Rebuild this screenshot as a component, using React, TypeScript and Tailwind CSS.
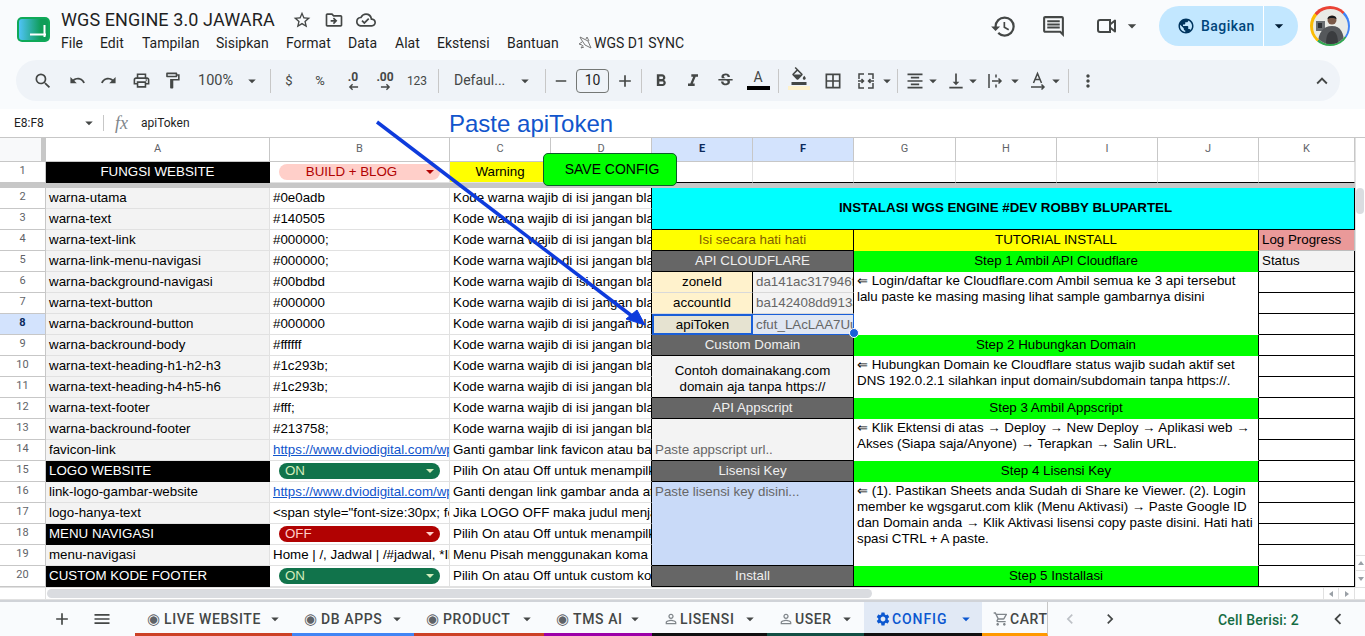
import type { ReactNode } from "react";
import { Fragment } from "react";
import { twMerge } from "tailwind-merge";
import {
  MdAdd,
  MdArrowDropDown,
  MdBorderAll,
  MdChevronLeft,
  MdChevronRight,
  MdExpandLess,
  MdFormatAlignCenter,
  MdFormatBold,
  MdFormatColorFill,
  MdFormatItalic,
  MdHistory,
  MdMenu,
  MdMoreVert,
  MdOutlineCloudDone,
  MdOutlineComment,
  MdOutlineDriveFileMove,
  MdOutlineFormatPaint,
  MdOutlinePersonOutline,
  MdOutlinePrint,
  MdOutlineShoppingCart,
  MdPublic,
  MdRedo,
  MdRemove,
  MdSearch,
  MdSettings,
  MdStarBorder,
  MdStrikethroughS,
  MdUndo,
  MdVerticalAlignBottom,
} from "react-icons/md";

const arial = "font-['Liberation_Sans',Arial,sans-serif]";

const Slot = ({ className, children }: { className: string; children?: ReactNode }) => (
  <div className={twMerge("flex h-full shrink-0 items-center justify-center text-[#444746]", className)}>{children}</div>
);

const Caret = ({ className = "w-[12px]" }: { className?: string }) => (
  <Slot className={className}>
    <MdArrowDropDown size={18} className="shrink-0" />
  </Slot>
);

const Sep = ({ className }: { className: string }) => <div className={twMerge("h-[24px] w-px shrink-0 bg-[#c7c7c7]", className)} />;

const Cell = ({ className, children }: { className?: string; children?: ReactNode }) => (
  <div className={twMerge("flex min-w-0 items-end overflow-hidden whitespace-nowrap border-r border-b border-[#e1e1e1] px-[3px] pb-[2px] text-[13.33px] leading-[17px] text-black", className)}>
    {children}
  </div>
);

const RowHead = ({ n, active }: { n: number; active?: boolean }) => (
  <div className={twMerge("flex items-center justify-center border-r border-b border-[#c7c7c7] bg-white pb-[1px] font-['Roboto'] text-[11px] text-[#5f6368]", active && "bg-[#d3e3fd] font-bold text-[#0b2a5c]")}>
    {n}
  </div>
);

const ColHead = ({ label, active }: { label: string; active?: boolean }) => (
  <div className={twMerge("flex items-center justify-center border-r border-b border-[#c7c7c7] bg-white font-['Roboto'] text-[11px] text-[#5f6368]", active && "bg-[#d3e3fd] font-bold text-[#0b2a5c]")}>
    {label}
  </div>
);

const Chip = ({ label, tone }: { label: string; tone: "on" | "off" | "build" }) => {
  const styles = {
    on: "bg-[#11734b] text-[#d4edbc]",
    off: "bg-[#b10202] text-[#ffcfc9]",
    build: "bg-[#ffcfc9] text-[#b10202]",
  };
  return (
    <div className="flex items-center border-r border-b border-[#e1e1e1] pl-[9px] pr-[9px]">
      <div className={twMerge("flex h-[16px] w-full items-center rounded-full pl-[6px] pr-[6px] text-[13.33px]", styles[tone])}>
        <span className={tone === "build" ? "flex-1 pr-[8px] text-center" : "flex-1"}>{label}</span>
        <span className="h-0 w-0 border-x-[4px] border-t-[4px] border-x-transparent border-t-current" />
      </div>
    </div>
  );
};

const kode = "Kode warna wajib di isi jangan blan";
const rows: { n: number; a: string; b: string; c: string; kind?: "head" | "link"; chip?: "on" | "off" }[] = [
  { n: 2, a: "warna-utama", b: "#0e0adb", c: kode },
  { n: 3, a: "warna-text", b: "#140505", c: kode },
  { n: 4, a: "warna-text-link", b: "#000000;", c: kode },
  { n: 5, a: "warna-link-menu-navigasi", b: "#000000;", c: kode },
  { n: 6, a: "warna-background-navigasi", b: "#00bdbd", c: kode },
  { n: 7, a: "warna-text-button", b: "#000000", c: kode },
  { n: 8, a: "warna-backround-button", b: "#000000", c: kode },
  { n: 9, a: "warna-backround-body", b: "#ffffff", c: kode },
  { n: 10, a: "warna-text-heading-h1-h2-h3", b: "#1c293b;", c: kode },
  { n: 11, a: "warna-text-heading-h4-h5-h6", b: "#1c293b;", c: kode },
  { n: 12, a: "warna-text-footer", b: "#fff;", c: kode },
  { n: 13, a: "warna-backround-footer", b: "#213758;", c: kode },
  { n: 14, a: "favicon-link", b: "https://www.dviodigital.com/wp", c: "Ganti gambar link favicon atau bar", kind: "link" },
  { n: 15, a: "LOGO WEBSITE", b: "ON", c: "Pilih On atau Off untuk menampilka", kind: "head", chip: "on" },
  { n: 16, a: "link-logo-gambar-website", b: "https://www.dviodigital.com/wp", c: "Ganti dengan link gambar anda ata", kind: "link" },
  { n: 17, a: "logo-hanya-text", b: '<span style="font-size:30px; fo', c: "Jika LOGO OFF maka judul menjad" },
  { n: 18, a: "MENU NAVIGASI", b: "OFF", c: "Pilih On atau Off untuk menampilka", kind: "head", chip: "off" },
  { n: 19, a: "menu-navigasi", b: "Home | /, Jadwal | /#jadwal, *Ib", c: "Menu Pisah menggunakan koma d" },
  { n: 20, a: "CUSTOM KODE FOOTER", b: "ON", c: "Pilih On atau Off untuk custom kod", kind: "head", chip: "on" },
];

const dark = "justify-center border-black bg-[#666666] text-[#efefef]";
const step = "col-span-4 justify-center border-[#00ff00] border-r-black bg-[#00ff00]";
const note = "col-span-4 items-start whitespace-normal border-b-[#ffffff] border-r-black bg-white pt-[1px] text-[13.33px] leading-[16px]";
const log = "border-black bg-white";

// merged block on the right of the sheet, keyed by row number
const right: Record<number, ReactNode> = {
  2: <Cell className="col-span-7 row-span-2 items-center justify-center border-black bg-[#00ffff] pb-[2px] pl-[8px] text-[13.33px] font-bold">INSTALASI WGS ENGINE #DEV ROBBY BLUPARTEL</Cell>,
  4: (
    <>
      <Cell className="col-span-2 justify-center border-black bg-[#ffff00] text-[#7f6000]">Isi secara hati hati</Cell>
      <Cell className="col-span-4 justify-center border-[#ffff00] border-r-black bg-[#ffff00]">TUTORIAL INSTALL</Cell>
      <Cell className="border-[#bdbdbd] bg-[#ea9999]">Log Progress</Cell>
    </>
  ),
  5: (
    <>
      <Cell className={twMerge("col-span-2", dark)}>API CLOUDFLARE</Cell>
      <Cell className={step}>Step 1 Ambil API Cloudflare</Cell>
      <Cell className="border-black bg-[#f3f3f3]">Status</Cell>
    </>
  ),
  6: (
    <>
      <Cell className="justify-center border-[#d9d9d9] border-r-black bg-[#fff2cc]">zoneId</Cell>
      <Cell className="border-black border-b-[#d9d9d9] bg-[#f3f3f3] text-[#666666]">da141ac317946f</Cell>
      <Cell className={twMerge("row-span-3 pt-[2px]", note)}>⇐ Login/daftar ke Cloudflare.com Ambil semua ke 3 api tersebut lalu paste ke masing masing lihat sample gambarnya disini</Cell>
      <Cell className={log} />
    </>
  ),
  7: (
    <>
      <Cell className="justify-center border-[#d9d9d9] border-r-black bg-[#fff2cc]">accountId</Cell>
      <Cell className="border-black border-b-[#d9d9d9] bg-[#f3f3f3] text-[#666666]">ba142408dd913a</Cell>
      <Cell className={log} />
    </>
  ),
  8: (
    <>
      <Cell className="justify-center border-2 border-[#1a5fd8] bg-[#e6e3d1] pb-0">apiToken</Cell>
      <Cell className="border border-l-0 border-[#1a5fd8] bg-[#e0e7f3] pb-[1px] text-[#666666]">cfut_LAcLAA7Uu</Cell>
      <Cell className={log} />
    </>
  ),
  9: (
    <>
      <Cell className={twMerge("col-span-2", dark)}>Custom Domain</Cell>
      <Cell className={step}>Step 2 Hubungkan Domain</Cell>
      <Cell className={log} />
    </>
  ),
  10: (
    <>
      <Cell className="col-span-2 row-span-2 justify-center whitespace-normal border-black bg-[#f3f3f3] text-center leading-[16px]">
        Contoh domainakang.com domain aja tanpa https://
      </Cell>
      <Cell className={twMerge("row-span-2 pt-[2px]", note)}>⇐ Hubungkan Domain ke Cloudflare status wajib sudah aktif set DNS 192.0.2.1 silahkan input domain/subdomain tanpa https://.</Cell>
      <Cell className={log} />
    </>
  ),
  11: <Cell className={log} />,
  12: (
    <>
      <Cell className={twMerge("col-span-2", dark)}>API Appscript</Cell>
      <Cell className={step}>Step 3 Ambil Appscript</Cell>
      <Cell className={log} />
    </>
  ),
  13: (
    <>
      <Cell className="col-span-2 row-span-2 border-black bg-[#f3f3f3] text-[#666666]">Paste appscript url..</Cell>
      <Cell className={twMerge("row-span-2 pt-[2px]", note)}>⇐ Klik Ektensi di atas → Deploy → New Deploy → Aplikasi web → Akses (Siapa saja/Anyone) → Terapkan → Salin URL.</Cell>
      <Cell className={log} />
    </>
  ),
  14: <Cell className={log} />,
  15: (
    <>
      <Cell className={twMerge("col-span-2", dark)}>Lisensi Key</Cell>
      <Cell className={step}>Step 4 Lisensi Key</Cell>
      <Cell className={log} />
    </>
  ),
  16: (
    <>
      <Cell className="col-span-2 row-span-4 items-start border-black bg-[#c9daf8] pt-[1px] text-[#666666]">Paste lisensi key disini...</Cell>
      <Cell className={twMerge("row-span-4", note)}>
        ⇐ (1). Pastikan Sheets anda Sudah di Share ke Viewer. (2). Login member ke wgsgarut.com klik (Menu Aktivasi) → Paste Google ID dan Domain anda → Klik Aktivasi lisensi copy paste disini. Hati hati spasi CTRL + A paste.
      </Cell>
      <Cell className={log} />
    </>
  ),
  17: <Cell className={log} />,
  18: <Cell className={log} />,
  19: <Cell className={log} />,
  20: (
    <>
      <Cell className={twMerge("col-span-2", dark)}>Install</Cell>
      <Cell className="col-span-4 justify-center border-black bg-[#00ff00]">Step 5 Installasi</Cell>
      <Cell className={log} />
    </>
  ),
};

const MergeIcon = () => (
  <svg width="20" height="20" viewBox="0 0 20 20" fill="none" stroke="currentColor" strokeWidth="1.5">
    <path d="M8 3H3v5M3 12v5h5M12 3h5v5M17 12v5h-5" />
    <path d="M2 10h5M5.500 8l2 2-2 2M18 10h-5M14.500 8l-2 2 2 2" />
  </svg>
);

const WrapIcon = () => (
  <svg width="18" height="18" viewBox="0 0 18 18" fill="none" stroke="currentColor" strokeWidth="1.500">
    <path d="M3 2v14M10 2.500v3M10 12.500v3M6 9h9M12.500 6.500L15 9l-2.500 2.500" />
  </svg>
);

const RotateIcon = () => (
  <svg width="20" height="20" viewBox="0 0 20 20" fill="none" stroke="currentColor" strokeWidth="1.500">
    <path d="M5.500 12L9.500 2.500 13.500 12M7 8.500h5" />
    <path d="M3 16h13M13.500 13.500L16 16l-2.500 2.500" />
  </svg>
);

const VideoIcon = () => (
  <svg width="26" height="26" viewBox="0 0 26 26" fill="none" stroke="currentColor" strokeWidth="2">
    <path d="M6 7h10v12H6a2 2 0 01-2-2V9a2 2 0 012-2z" />
    <path d="M16 11.500L21 7.500v11l-5-4" strokeLinejoin="round" />
  </svg>
);

const Decimal = ({ label, dir }: { label: string; dir: "left" | "right" }) => (
  <div className="relative flex w-[24px] justify-center pb-[8px] font-['Roboto'] text-[12px] font-bold leading-none text-[#444746]">
    {label}
    <svg className="absolute bottom-0 left-[7px]" width="11" height="8" viewBox="0 0 12 8" fill="none" stroke="currentColor" strokeWidth="1.500">
      {dir === "left" ? <path d="M11 4H2M5 1L2 4l3 3" /> : <path d="M1 4h9M7 1l3 3-3 3" />}
    </svg>
  </div>
);

const Logo = () => (
  <svg width="33" height="25" viewBox="0 0 33 25" className="shrink-0">
    <defs>
      <linearGradient id="logoFill" x1="0" x2="1" y1="0" y2="0">
        <stop offset="0" stopColor="#4fc3f7" />
        <stop offset="0.75" stopColor="#0f9d58" />
      </linearGradient>
    </defs>
    <rect x="0" y="0" width="33" height="25" rx="5" fill="#0fa958" />
    <rect x="2" y="2" width="29" height="21" rx="3" fill="url(#logoFill)" />
    <path d="M13 17.500h16M27.500 8v12" stroke="#fff" strokeWidth="2" fill="none" />
  </svg>
);

const Avatar = () => (
  <div className="flex h-[40px] w-[40px] items-center justify-center rounded-full bg-[conic-gradient(from_-50deg,#ea4335_0deg_95deg,#4285f4_95deg_175deg,#34a853_175deg_270deg,#fbbc04_270deg_360deg)]">
    <svg width="35" height="35" viewBox="0 0 35 35" className="rounded-full bg-[#e9ebe6]">
      <rect x="3" y="12" width="9" height="10" fill="#6a6f72" />
      <rect x="5" y="14" width="4" height="5" fill="#2f3235" />
      <circle cx="19" cy="11" r="4.500" fill="#7a5a48" />
      <path d="M14.500 10c0-4 9-4.500 9 0-2-1.500-7-1.500-9 0z" fill="#17191b" />
      <path d="M5 35c0-11 5-18 14-18s12 7 12 18z" fill="#55585b" />
      <path d="M13 35c0-8 2-13 6-13s6 5 6 13z" fill="#3a3c3f" />
    </svg>
  </div>
);

const tabs = [
  { label: "LIVE WEBSITE", mark: "◉", w: "w-[157px]", line: "border-b-[#cc4125]", pl: "pl-[12px]" },
  { label: "DB APPS", mark: "◉", w: "w-[122px]", line: "border-b-[#4285f4]", pl: "pl-[12px]" },
  { label: "PRODUCT", mark: "◉", w: "w-[130px]", line: "border-b-[#cc4125]", pl: "pl-[12px]" },
  { label: "TMS AI", mark: "◉", w: "w-[108px]", line: "border-b-[#9c00a8]", pl: "pl-[12px]" },
  { label: "LISENSI", mark: "user", w: "w-[115px]", line: "border-b-[#111111]", pl: "pl-[11px]" },
  { label: "USER", mark: "user", w: "w-[97px]", line: "border-b-[#134f44]", pl: "pl-[11px]" },
];

export default function App() {
  return (
    <div className="relative flex h-[636px] w-[1365px] flex-col overflow-hidden bg-white font-['Roboto',sans-serif]">
      {/* title + menu */}
      <div className="h-[60px] shrink-0 bg-[#f9fbfd]">
        <div className="flex h-full pl-[17px] pr-[15px]">
          <div className="pt-[17px]">
            <Logo />
          </div>
          <div className="ml-[11px] flex flex-col pt-[7px]">
            <div className="flex h-[25px] items-center">
              <span className="text-[18px] leading-none tracking-[0.1px] text-[#1f1f1f]">WGS ENGINE 3.0 JAWARA</span>
              <div className="ml-[17px] flex w-[96px] items-center gap-[12px] text-[#444746]">
                <MdStarBorder size={20} />
                <MdOutlineDriveFileMove size={20} />
                <MdOutlineCloudDone size={20} />
              </div>
            </div>
            <div className="mt-[1px] flex h-[20px] items-center text-[14px] text-[#1f1f1f]">
              <span className="w-[39px]">File</span>
              <span className="w-[42px]">Edit</span>
              <span className="w-[74px]">Tampilan</span>
              <span className="w-[70px]">Sisipkan</span>
              <span className="w-[62px]">Format</span>
              <span className="w-[47px]">Data</span>
              <span className="w-[42px]">Alat</span>
              <span className="w-[70px]">Ekstensi</span>
              <span className="w-[70px]">Bantuan</span>
              <svg width="16" height="16" viewBox="0 0 16 16" fill="none" stroke="#777" strokeWidth="1" className="mr-[1px]">
                <path d="M3 2l8 4 3 7-6-3-4-6zM5 7l-3 2 3 1M9 4l1-2 2 4M6 10l-2 3 3-1" />
              </svg>
              <span className="text-[14px]">WGS D1 SYNC</span>
            </div>
          </div>
          <div className="ml-auto flex h-[52px] items-center text-[#444746]">
            <MdHistory size={27} />
            <MdOutlineComment size={25} className="ml-[24px]" />
            <div className="ml-[28px]">
              <VideoIcon />
            </div>
            <MdArrowDropDown size={20} className="ml-[2px]" />
            <div className="ml-[17px] flex h-[40px] w-[139px] items-center rounded-full bg-[#c2e7ff] text-[#001d35]">
              <MdPublic size={18} className="ml-[18px] text-[#00355f]" />
              <span className="ml-[6px] text-[14px] font-medium tracking-[0.45px] text-[#00457a]">Bagikan</span>
              <div className="ml-[8px] h-full w-px bg-white" />
              <MdArrowDropDown size={20} className="ml-[5px]" />
            </div>
            <div className="ml-[12px]">
              <Avatar />
            </div>
          </div>
        </div>
      </div>

      {/* toolbar */}
      <div className="h-[49px] shrink-0 bg-[#f9fbfd] pl-[16px] pr-[25px]">
        <div className="flex h-[41px] items-center rounded-full bg-[#eff3f8] pl-[11px] pr-[6px] text-[#444746]">
          <Slot className="w-[32px]"><MdSearch size={20} /></Slot>
          <Slot className="w-[36px]"><MdUndo size={17} /></Slot>
          <Slot className="w-[26px]"><MdRedo size={17} /></Slot>
          <Slot className="w-[40px]"><MdOutlinePrint size={19} /></Slot>
          <Slot className="w-[22px]"><MdOutlineFormatPaint size={19} /></Slot>
          <Slot className="w-[61px] justify-start pl-[15px] text-[14.5px]">100%</Slot>
          <Caret className="w-[16px]" />
          <Sep className="ml-[10px]" />
          <Slot className="w-[36px] text-[13px]">$</Slot>
          <Slot className="w-[26px] text-[13px]">%</Slot>
          <Slot className="w-[40px]"><Decimal label=".0" dir="left" /></Slot>
          <Slot className="w-[24px]"><Decimal label=".00" dir="right" /></Slot>
          <Slot className="w-[40px] text-[12px]">123</Slot>
          <Sep className="ml-[1px]" />
          <Slot className="w-[78px] justify-start pl-[15px] text-[14px]">Defaul...</Slot>
          <Caret className="w-[16px]" />
          <Sep className="ml-[12px]" />
          <Slot className="w-[30px]"><MdRemove size={18} /></Slot>
          <div className="flex h-[24px] w-[33px] shrink-0 items-center justify-center rounded-[4px] border border-[#747775] text-[14px] text-[#1f1f1f]">10</div>
          <Slot className="w-[32px]"><MdAdd size={20} /></Slot>
          <Sep className="" />
          <Slot className="w-[38px]"><MdFormatBold size={20} /></Slot>
          <Slot className="w-[26px]"><MdFormatItalic size={20} /></Slot>
          <Slot className="w-[38px]"><MdStrikethroughS size={19} /></Slot>
          <Slot className="relative w-[28px]">
            <span className="pb-[8px] text-[14px] leading-none">A</span>
            <span className="absolute left-[3px] top-[26px] h-[4px] w-[23px] bg-black" />
          </Slot>
          <Sep className="ml-[6px]" />
          <Slot className="relative w-[40px]">
            <MdFormatColorFill size={18} className="-mt-[9px]" />
            <span className="absolute left-[9px] top-[26px] h-[4px] w-[22px] bg-[#fff2cc]" />
          </Slot>
          <Slot className="w-[32px]"><MdBorderAll size={20} className="-ml-[4px]" /></Slot>
          <Slot className="w-[30px]"><MergeIcon /></Slot>
          <Caret />
          <Sep className="ml-[4px]" />
          <Slot className="ml-[5px] w-[24px]"><MdFormatAlignCenter size={20} /></Slot>
          <Caret />
          <Slot className="ml-[6px] w-[22px]"><MdVerticalAlignBottom size={20} /></Slot>
          <Caret />
          <Slot className="ml-[5px] w-[22px]"><WrapIcon /></Slot>
          <Caret className="ml-[3px] w-[12px]" />
          <Slot className="ml-[6px] w-[22px]"><RotateIcon /></Slot>
          <Caret className="ml-[1px] w-[12px]" />
          <Sep className="ml-[6px]" />
          <Slot className="w-[38px]"><MdMoreVert size={20} /></Slot>
          <Slot className="ml-auto w-[24px]"><MdExpandLess size={22} /></Slot>
        </div>
      </div>

      {/* formula bar */}
      <div className="flex h-[29px] shrink-0 items-center border-b border-[#c7c7c7] bg-white text-[12px] text-[#1f1f1f]">
        <span className="ml-[14px] w-[66px]">E8:F8</span>
        <MdArrowDropDown size={18} className="text-[#444746]" />
        <div className="ml-[5px] h-[16px] w-px bg-[#c7c7c7]" />
        <span className="ml-[11px] font-['Liberation_Serif'] text-[18px] italic leading-none text-[#80868b]">fx</span>
        <span className="ml-[13px]">apiToken</span>
      </div>

      {/* sheet */}
      <div className={twMerge("flex h-[449px] shrink-0", arial)}>
        <div className="grid w-[1355px] shrink-0 grid-cols-[46px_224px_180px_101px_101px_101px_101px_102px_101px_101px_101px_96px] grid-rows-[24px_21px_5px_repeat(19,21px)]">
          <div className="flex justify-end border-b border-[#c7c7c7] bg-[#f8f9fa]">
            <div className="h-full w-[5px] bg-[#c7c7c7]" />
          </div>
          {["A", "B", "C", "D", "E", "F", "G", "H", "I", "J", "K"].map((c) => (
            <ColHead key={c} label={c} active={c === "E" || c === "F"} />
          ))}

          <RowHead n={1} />
          <Cell className="justify-center border-black bg-black text-white">FUNGSI WEBSITE</Cell>
          <Chip label="BUILD + BLOG" tone="build" />
          <Cell className="justify-center bg-[#ffff00]">Warning</Cell>
          <Cell />
          {["e", "f", "g", "h", "i", "j", "k"].map((c) => (
            <Cell key={c} className="border-b-black" />
          ))}

          <div className="col-span-12 bg-[#c7c7c7]" />

          {rows.map((r) => (
            <Fragment key={r.n}>
              <RowHead n={r.n} active={r.n === 8} />
              <Cell className={r.kind === "head" ? "border-black bg-black text-white" : "bg-[#f3f3f3]"}>{r.a}</Cell>
              {r.chip ? (
                <Chip label={r.b} tone={r.chip} />
              ) : (
                <Cell className={r.kind === "link" ? "text-[#1155cc] underline" : ""}>{r.b}</Cell>
              )}
              <Cell className="col-span-2 border-r-black">{r.c}</Cell>
              {right[r.n]}
            </Fragment>
          ))}
        </div>

        {/* vertical scrollbar */}
        <div className="flex w-[10px] flex-col border-l border-[#e1e1e1]">
          <div className="mt-[50px] h-[26px] w-[8px] rounded-[4px] bg-[#dadce0]" />
          <div className="mt-auto flex h-[16px] items-center justify-center border-y border-[#e1e1e1]">
            <span className="h-0 w-0 border-x-[3px] border-b-[4px] border-x-transparent border-b-[#9aa0a6]" />
          </div>
          <div className="flex h-[16px] items-center justify-center">
            <span className="h-0 w-0 border-x-[3px] border-t-[4px] border-x-transparent border-t-[#9aa0a6]" />
          </div>
        </div>
      </div>

      {/* horizontal scrollbar */}
      <div className="flex h-[13px] shrink-0 border-y border-[#e1e1e1] bg-white">
        <div className="w-[46px] border-r border-[#e1e1e1]" />
        <div className="ml-[1px] mt-[1px] h-[9px] w-[825px] rounded-full bg-[#dadce0]" />
        <div className="ml-auto mr-[10px] flex h-full">
          <div className="flex w-[16px] items-center justify-center border-x border-[#e1e1e1]">
            <span className="h-0 w-0 border-y-[3px] border-r-[4px] border-y-transparent border-r-[#9aa0a6]" />
          </div>
          <div className="flex w-[16px] items-center justify-center border-r border-[#e1e1e1]">
            <span className="h-0 w-0 border-y-[3px] border-l-[4px] border-y-transparent border-l-[#9aa0a6]" />
          </div>
        </div>
      </div>

      {/* sheet tabs */}
      <div className="flex h-[36px] shrink-0 items-stretch border-t-2 border-[#d0d3d8] bg-[#f9fbfd] text-[#444746]">
        <Slot className="ml-[51px] w-[22px]"><MdAdd size={20} /></Slot>
        <Slot className="ml-[18px] w-[22px]"><MdMenu size={20} /></Slot>
        <div className="ml-[22px] flex">
          {tabs.map((t) => (
            <div key={t.label} className={twMerge("flex items-center border-b-[3px] pt-[3px] text-[14px] font-medium tracking-[0.6px]", t.w, t.line, t.pl)}>
              {t.mark === "user" ? (
                <MdOutlinePersonOutline size={16} className="shrink-0 text-[#80868b]" />
              ) : (
                <span className="text-[15px] tracking-normal text-[#5f6368]">{t.mark}</span>
              )}
              <span className={t.mark === "user" ? "ml-[1px]" : "ml-[4px]"}>{t.label}</span>
              <MdArrowDropDown size={18} className="ml-auto mr-[8px] shrink-0" />
            </div>
          ))}
          <div className="flex w-[118px] items-center border-b-[3px] border-b-[#111111] bg-[#e1e9f5] pl-[11px] pt-[3px] text-[14px] font-medium tracking-[0.9px] text-[#0b57d0]">
            <MdSettings size={16} className="shrink-0" />
            <span className="ml-[1px]">CONFIG</span>
            <MdArrowDropDown size={18} className="ml-auto mr-[7px] shrink-0" />
          </div>
          <div className="flex w-[66px] items-center overflow-hidden whitespace-nowrap border-b-[3px] border-r border-[#ff9900] border-r-[#c7c7c7] pl-[11px] pt-[3px] text-[14px] font-medium tracking-[0.6px]">
            <MdOutlineShoppingCart size={16} className="shrink-0 text-[#80868b]" />
            <span className="ml-[1px]">CART</span>
          </div>
        </div>
        <Slot className="ml-[10px] w-[24px] text-[#bdc1c6]"><MdChevronLeft size={20} /></Slot>
        <Slot className="ml-[16px] w-[24px]"><MdChevronRight size={20} /></Slot>
        <span className="ml-[96px] flex items-center pt-[2px] text-[14px] font-medium tracking-[0.2px] text-[#146c43]">Cell Berisi: 2</span>
        <Slot className="ml-[27px] w-[24px]"><MdChevronLeft size={22} /></Slot>
      </div>

      {/* drawn over the sheet: arrow, text box, button, fill handle */}
      <svg className="pointer-events-none absolute left-0 top-0" width="1365" height="636" viewBox="0 0 1365 636">
        <path d="M377 122L632 316" stroke="#0e3bdc" strokeWidth="3.5" fill="none" />
        <path d="M645 325L626 319L637 310Z" fill="#0e3bdc" stroke="#0e3bdc" strokeWidth="1" />
      </svg>
      <span className={twMerge("absolute left-[449px] top-[110px] text-[24px] leading-[28px] text-[#1155cc]", arial)}>Paste apiToken</span>
      <div className={twMerge("absolute left-[543px] top-[153px] flex h-[33px] w-[134px] items-center justify-center rounded-[5px] border border-[#0d5c2a] bg-[#00ff00] pl-[4px] text-[14px] text-black", arial)}>
        SAVE CONFIG
      </div>
      <div className="absolute left-[849px] top-[328px] h-[10px] w-[10px] rounded-full border border-white bg-[#1a5fd8]" />
    </div>
  );
}
